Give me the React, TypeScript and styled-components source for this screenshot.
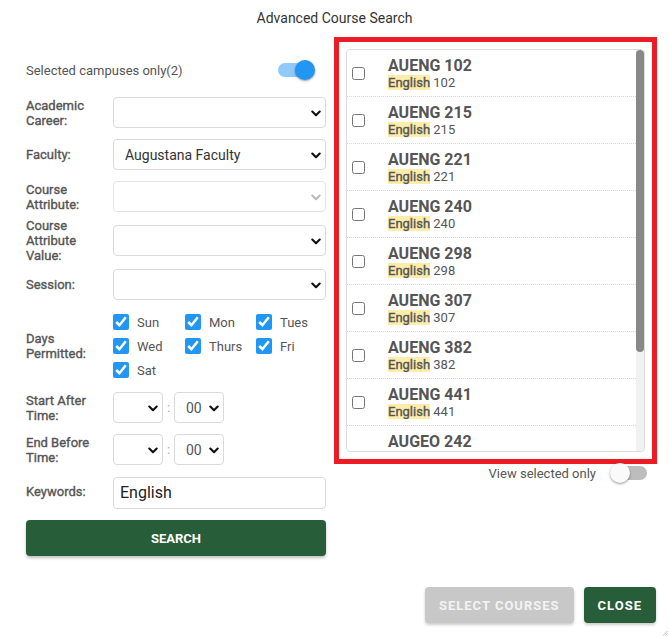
import React from "react";
import styled, { createGlobalStyle } from "styled-components";

const GlobalStyle = createGlobalStyle`
  html, body { margin: 0; padding: 0; background: #fff; }
  body { font-family: Roboto, "Liberation Sans", Arial, sans-serif; }
  * { box-sizing: border-box; }
`;

type Course = { code: string; num: string; subtitle?: string };

const courses: Course[] = [
  { code: "AUENG 102", num: "102" },
  { code: "AUENG 215", num: "215" },
  { code: "AUENG 221", num: "221" },
  { code: "AUENG 240", num: "240" },
  { code: "AUENG 298", num: "298" },
  { code: "AUENG 307", num: "307" },
  { code: "AUENG 382", num: "382" },
  { code: "AUENG 441", num: "441" },
  { code: "AUGEO 242", num: "", subtitle: "Geography of the English Speaking World and its Regions" },
  { code: "AUHIS 260", num: "260" },
  { code: "AUIDS 101", num: "101" },
];

const days = ["Sun", "Mon", "Tues", "Wed", "Thurs", "Fri", "Sat"];

const Chevron: React.FC<{ disabled?: boolean }> = ({ disabled }) => (
  <ChevronIcon viewBox="0 0 10 7" $disabled={disabled}>
    <path d="M1.3 1.5 L5 5.2 L8.7 1.5" />
  </ChevronIcon>
);

const Select: React.FC<{ value?: string; disabled?: boolean; $small?: boolean }> = ({ value, disabled, $small }) => (
  <SelectWrap $small={$small}>
    <NativeSelect disabled={disabled} defaultValue={value ?? ""} $small={$small}>
      <option value={value ?? ""}>{value ?? ""}</option>
    </NativeSelect>
    <Chevron disabled={disabled} />
  </SelectWrap>
);

const Switch: React.FC<{ on?: boolean }> = ({ on }) => (
  <SwitchRoot>
    <SwitchTrack $on={on} />
    <SwitchThumb $on={on} />
  </SwitchRoot>
);

const TimePicker: React.FC = () => (
  <TimeGroup>
    <Select $small />
    <Colon>:</Colon>
    <Select $small value="00" />
  </TimeGroup>
);

export default function App() {
  return (
    <>
      <GlobalStyle />
      <Dialog>
        <Header>Advanced Course Search</Header>
        <Content>
          <LeftCol>
            <ToggleRow>
              <span>Selected campuses only(2)</span>
              <Switch on />
            </ToggleRow>

            <FieldRow>
              <Label>Academic<br />Career:</Label>
              <Select />
            </FieldRow>
            <FieldRow>
              <Label>Faculty:</Label>
              <Select value="Augustana Faculty" />
            </FieldRow>
            <FieldRow>
              <Label>Course<br />Attribute:</Label>
              <Select disabled />
            </FieldRow>
            <FieldRow>
              <Label>Course<br />Attribute<br />Value:</Label>
              <Select />
            </FieldRow>
            <FieldRow>
              <Label>Session:</Label>
              <Select />
            </FieldRow>
            <FieldRow>
              <Label>Days<br />Permitted:</Label>
              <DaysGrid>
                {days.map((d) => (
                  <DayItem key={d}>
                    <DayBox type="checkbox" defaultChecked />
                    {d}
                  </DayItem>
                ))}
              </DaysGrid>
            </FieldRow>
            <FieldRow>
              <Label>Start After<br />Time:</Label>
              <TimePicker />
            </FieldRow>
            <FieldRow>
              <Label>End Before<br />Time:</Label>
              <TimePicker />
            </FieldRow>
            <FieldRow>
              <Label>Keywords:</Label>
              <TextInput defaultValue="English" />
            </FieldRow>
            <SearchButton>Search</SearchButton>
          </LeftCol>

          <RightCol>
            <HighlightFrame>
              <ListBox>
                <Items>
                  {courses.map((c) => (
                    <CourseRow key={c.code}>
                      <RowCheck type="checkbox" />
                      <CourseText>
                        <CourseCode>{c.code}</CourseCode>
                        <CourseSub>
                          {c.subtitle ? (
                            c.subtitle
                          ) : (
                            <>
                              <Hl>English</Hl> {c.num}
                            </>
                          )}
                        </CourseSub>
                      </CourseText>
                    </CourseRow>
                  ))}
                </Items>
                <ScrollTrack>
                  <ScrollThumb />
                </ScrollTrack>
              </ListBox>
            </HighlightFrame>
            <ViewRow>
              <span>View selected only</span>
              <Switch />
            </ViewRow>
          </RightCol>
        </Content>

        <Footer>
          <ActionButton $disabled>Select courses</ActionButton>
          <ActionButton>Close</ActionButton>
        </Footer>

        <ResizeGrip viewBox="0 0 6 6">
          <path d="M1 5.5 L5.5 1 M3.5 5.5 L5.5 3.5" />
        </ResizeGrip>
      </Dialog>
    </>
  );
}

const Dialog = styled.div`
  position: relative;
  width: 669px;
  height: 637px;
  display: flex;
  flex-direction: column;
  background: #fff;
  overflow: hidden;
`;

const Header = styled.div`
  height: 36px;
  display: flex;
  align-items: center;
  justify-content: center;
  font-size: 14px;
  color: #333;
`;

const Content = styled.div`
  display: grid;
  grid-template-columns: 300px 323px;
  column-gap: 8px;
  padding: 1px 0 0 26px;
`;

const LeftCol = styled.div`
  display: flex;
  flex-direction: column;
  padding-top: 21px;
`;

const ToggleRow = styled.div`
  display: flex;
  align-items: center;
  justify-content: space-between;
  height: 24px;
  padding-right: 11px;
  margin-bottom: 10px;
  font-size: 13px;
  color: #555;
`;

const FieldRow = styled.div`
  display: grid;
  grid-template-columns: 87px 1fr;
  align-items: center;
  min-height: 41px;
  margin-bottom: 1px;
`;

const Label = styled.div`
  font-size: 13px;
  font-weight: 400;
  line-height: 15px;
  color: #555;
  -webkit-text-stroke: 0.35px #555;
`;

const SelectWrap = styled.div<{ $small?: boolean }>`
  position: relative;
  width: ${(p) => (p.$small ? "50px" : "100%")};
  height: 31px;
`;

const NativeSelect = styled.select<{ $small?: boolean }>`
  appearance: none;
  -webkit-appearance: none;
  width: 100%;
  height: 100%;
  border: 1px solid #dadada;
  border-radius: 4px;
  background: #fff;
  padding: 0 20px 0 11px;
  font-family: Roboto, "Liberation Sans", Arial, sans-serif;
  font-size: 14px;
  color: ${(p) => (p.$small ? "#555" : "#333")};
  outline: none;
  &:disabled {
    color: #999;
  }
`;

const ChevronIcon = styled.svg<{ $disabled?: boolean }>`
  position: absolute;
  right: 5px;
  top: 50%;
  width: 10px;
  height: 7px;
  margin-top: -3px;
  pointer-events: none;
  fill: none;
  stroke: ${(p) => (p.$disabled ? "#bbb" : "#111")};
  stroke-width: 2.1;
  stroke-linecap: round;
  stroke-linejoin: round;
`;

const SwitchRoot = styled.div`
  position: relative;
  width: 37px;
  height: 20px;
  flex: none;
`;

const SwitchTrack = styled.div<{ $on?: boolean }>`
  position: absolute;
  left: 0;
  top: 3px;
  width: 34px;
  height: 14px;
  border-radius: 7px;
  background: ${(p) => (p.$on ? "#90caf9" : "#bdbdbd")};
`;

const SwitchThumb = styled.div<{ $on?: boolean }>`
  position: absolute;
  top: 0;
  left: ${(p) => (p.$on ? "17px" : "-3px")};
  width: 20px;
  height: 20px;
  border-radius: 50%;
  background: ${(p) => (p.$on ? "#2196f3" : "#fafafa")};
  box-shadow: 0 1px 3px rgba(0, 0, 0, 0.3), 0 1px 1px rgba(0, 0, 0, 0.14);
`;

const DaysGrid = styled.div`
  display: grid;
  grid-template-columns: 72px 71px 60px;
  grid-auto-rows: 24px;
  padding: 4px 0;
`;

const DayItem = styled.label`
  display: flex;
  align-items: center;
  gap: 8px;
  font-size: 13px;
  color: #555;
`;

const DayBox = styled.input`
  width: 16px;
  height: 16px;
  margin: 0;
  accent-color: #2196f3;
`;

const TimeGroup = styled.div`
  display: flex;
  align-items: center;
`;

const Colon = styled.span`
  width: 11px;
  text-align: center;
  font-size: 13px;
  color: #aaa;
`;

const TextInput = styled.input`
  height: 32px;
  width: 100%;
  margin-top: 2px;
  border: 1px solid #dadada;
  border-radius: 4px;
  padding: 0 6px;
  font-family: Roboto, "Liberation Sans", Arial, sans-serif;
  font-size: 16px;
  color: #222;
  outline: none;
`;

const SearchButton = styled.button`
  margin-top: 7px;
  height: 36px;
  width: 300px;
  border: none;
  border-radius: 4px;
  background: #275d38;
  color: #fff;
  font-family: Roboto, "Liberation Sans", Arial, sans-serif;
  font-size: 13px;
  font-weight: 700;
  text-transform: uppercase;
  box-shadow: 0 2px 3px rgba(0, 0, 0, 0.25);
`;

const RightCol = styled.div`
  display: flex;
  flex-direction: column;
`;

const HighlightFrame = styled.div`
  border: 5px solid #ec1c24;
  padding: 7px;
`;

const ListBox = styled.div`
  display: flex;
  height: 403px;
  border: 1px solid #dcdcdc;
  border-radius: 4px;
  overflow: hidden;
`;

const Items = styled.div`
  flex: 1;
  overflow: hidden;
`;

const ScrollTrack = styled.div`
  width: 8px;
  flex: none;
  background: #f1f1f1;
`;

const ScrollThumb = styled.div`
  height: 302px;
  border-radius: 4px;
  background: #888;
`;

const CourseRow = styled.div`
  display: flex;
  align-items: center;
  padding: 6px 0 5px;
  border-bottom: 1px dotted #d6d6d6;
`;

const RowCheck = styled.input`
  width: 13px;
  height: 13px;
  margin: 0 0 0 5px;
  flex: none;
`;

const CourseText = styled.div`
  margin-left: 23px;
  padding-right: 20px;
`;

const CourseCode = styled.div`
  font-size: 16px;
  font-weight: 700;
  line-height: 19px;
  color: #555;
`;

const CourseSub = styled.div`
  font-size: 13px;
  line-height: 16px;
  color: #555;
`;

const Hl = styled.mark`
  background: #fcedaa;
  color: #555;
  font-weight: 400;
  -webkit-text-stroke: 0.35px #555;
`;

const ViewRow = styled.div`
  display: flex;
  align-items: center;
  justify-content: flex-end;
  gap: 17px;
  height: 20px;
  margin-top: -1px;
  padding-right: 7px;
  font-size: 13px;
  color: #555;
`;

const Footer = styled.div`
  margin-top: auto;
  display: flex;
  justify-content: flex-end;
  gap: 10px;
  padding: 0 13px 14px 0;
`;

const ActionButton = styled.button<{ $disabled?: boolean }>`
  height: 36px;
  padding: 0 14px;
  border: none;
  border-radius: 4px;
  background: ${(p) => (p.$disabled ? "#c8c8c8" : "#275d38")};
  color: ${(p) => (p.$disabled ? "#f3f3f3" : "#fff")};
  font-family: Roboto, "Liberation Sans", Arial, sans-serif;
  font-size: 13px;
  font-weight: 700;
  letter-spacing: 1px;
  text-transform: uppercase;
  box-shadow: 0 2px 3px rgba(0, 0, 0, 0.2);
`;

const ResizeGrip = styled.svg`
  position: absolute;
  right: 1px;
  bottom: 1px;
  width: 6px;
  height: 6px;
  fill: none;
  stroke: #999;
  stroke-width: 0.7;
`;
